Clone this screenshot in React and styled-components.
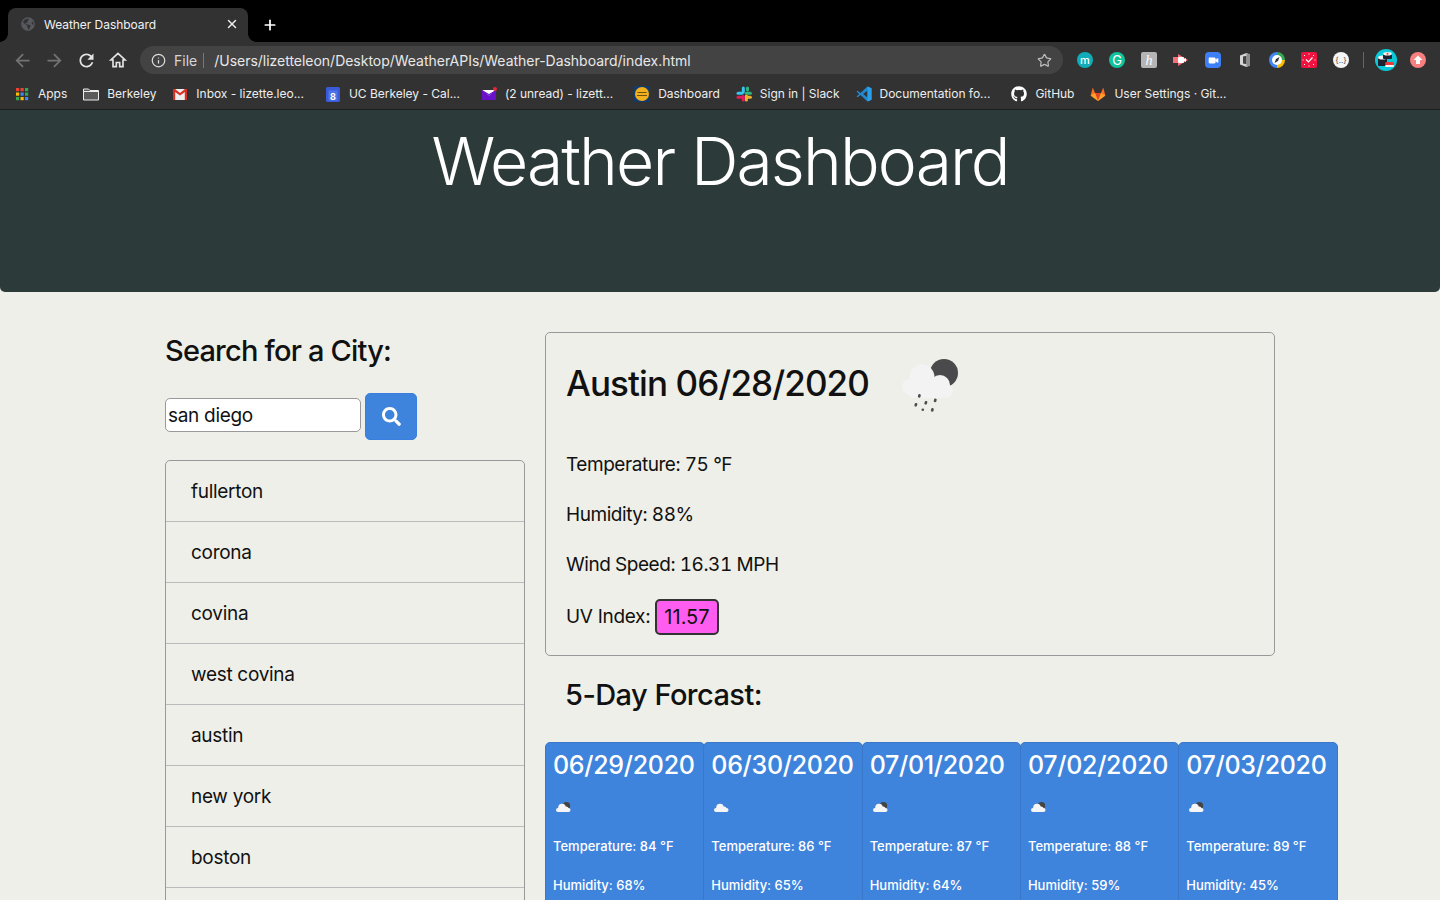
import React from "react";
import styled, { createGlobalStyle } from "styled-components";
import { Info, Star, X, Plus, Video } from "lucide-react";
import { FaGlobeAmericas, FaSearch, FaGithub } from "react-icons/fa";

const GlobalStyle = createGlobalStyle`
  html, body { margin: 0; padding: 0; background: #eeefe8; }
  body { font-family: Inter, "Liberation Sans", sans-serif; color: #111; overflow: hidden; }
  * { box-sizing: border-box; }
`;

const Page = styled.div`
  height: 900px;
  overflow: hidden;
  display: flex;
  flex-direction: column;
`;

/* browser chrome */
const TabStrip = styled.div`
  height: 42px;
  background: #000;
  display: flex;
  align-items: flex-end;
  padding-left: 8px;
  flex: none;
`;

const Tab = styled.div`
  position: relative;
  width: 240px;
  height: 34px;
  background: #323232;
  border-radius: 8px 8px 0 0;
  display: flex;
  align-items: center;
  padding: 0 9px 2px 13px;
  gap: 9px;
  color: #f1f1f1;
  font-size: 12px;

  &::before,
  &::after {
    content: "";
    position: absolute;
    bottom: 0;
    width: 8px;
    height: 8px;
  }
  &::before {
    left: -8px;
    background: radial-gradient(circle at 0 0, #000 7.5px, #323232 8px);
  }
  &::after {
    right: -8px;
    background: radial-gradient(circle at 100% 0, #000 7.5px, #323232 8px);
  }
`;

const TabTitle = styled.span`
  flex: 1;
  letter-spacing: -0.05px;
`;

const NewTab = styled.div`
  width: 16px;
  height: 34px;
  margin-left: 14px;
  padding-bottom: 1px;
  display: flex;
  align-items: center;
  color: #fff;
`;

const Toolbar = styled.div`
  height: 38px;
  background: #323232;
  display: flex;
  align-items: center;
  padding: 0 0 2px 6px;
  flex: none;
`;

const NavButton = styled.div`
  width: 32px;
  height: 28px;
  flex: none;
  display: flex;
  align-items: center;
  justify-content: center;
  color: ${(p) => (p.$off ? "#737373" : "#e3e3e3")};
`;

const AddressBar = styled.div`
  width: 923px;
  height: 28px;
  margin-left: 6px;
  flex: none;
  background: #434343;
  border-radius: 14px;
  display: flex;
  align-items: center;
  padding: 0 11px;
  color: #e8e8e8;
  font-size: 14px;
`;

const Scheme = styled.span`
  margin-left: 8px;
  padding-right: 6px;
  border-right: 1px solid #777;
  line-height: 15px;
  color: #d6d6d6;
`;

const Url = styled.span`
  margin-left: 10px;
  flex: 1;
  letter-spacing: -0.02px;
`;

const Extensions = styled.div`
  display: flex;
  align-items: center;
  margin-left: 6px;
  flex: none;
`;

const ExtSlot = styled.div`
  width: 32px;
  height: 28px;
  display: flex;
  align-items: center;
  justify-content: center;
`;

const ExtDivider = styled.div`
  width: 1px;
  height: 16px;
  background: #666;
  margin: 0 6px;
`;

const ExtBadge = styled.div`
  width: 16px;
  height: 16px;
  border-radius: ${(p) => p.$radius || "50%"};
  background: ${(p) => p.$bg};
  color: ${(p) => p.$fg || "#fff"};
  font-family: ${(p) => p.$font || "inherit"};
  font-size: ${(p) => p.$size || 11}px;
  font-weight: ${(p) => p.$weight || 400};
  line-height: 15px;
  text-align: center;
  display: flex;
  align-items: center;
  justify-content: center;
`;

const BookmarkBar = styled.div`
  height: 30px;
  background: #323232;
  border-bottom: 1px solid #1d1d1d;
  display: flex;
  align-items: center;
  padding: 0 0 2px 14px;
  gap: 16px;
  flex: none;
`;

const Bookmark = styled.div`
  display: flex;
  align-items: center;
  gap: 8px;
  color: #eee;
  font-size: 12px;
  letter-spacing: -0.02px;
  white-space: nowrap;
  padding-right: ${(p) => (p.$cut ? 5 : 0)}px;
`;

/* page */
const Hero = styled.header`
  height: 182px;
  background: #2d3a3a;
  border-radius: 0 0 5px 5px;
  text-align: center;
  flex: none;
`;

const HeroTitle = styled.h1`
  margin: 0;
  padding-top: 11px;
  font-size: 66px;
  line-height: 80px;
  font-weight: 300;
  letter-spacing: -1.9px;
  color: #fff;
`;

const Main = styled.main`
  display: flex;
  gap: 20px;
  padding: 40px 0 0 165px;
  flex: 1;
`;

const SearchColumn = styled.section`
  width: 360px;
  flex: none;
`;

const SearchTitle = styled.h2`
  margin: 0 0 24px;
  font-size: 29px;
  line-height: 37px;
  font-weight: 500;
  letter-spacing: -0.8px;
`;

const SearchRow = styled.div`
  display: flex;
  align-items: flex-start;
  gap: 4px;
  margin-bottom: 20px;
`;

const CityInput = styled.input`
  width: 196px;
  height: 34px;
  margin-top: 5px;
  padding: 0 2px;
  background: #fff;
  border: 1px solid #999;
  border-radius: 5px;
  font: 400 19px Inter, sans-serif;
  letter-spacing: -0.3px;
  color: #111;
  outline: none;
`;

const SearchButton = styled.button`
  width: 52px;
  height: 47px;
  border: 1px solid #3a7fe0;
  border-radius: 5px;
  background: #3f84dc;
  color: #fff;
  display: flex;
  align-items: center;
  justify-content: center;
  padding: 0;
  font-size: 19px;
`;

const CityList = styled.ul`
  margin: 0;
  padding: 0;
  list-style: none;
  border: 1px solid #999;
  border-radius: 5px;
`;

const CityItem = styled.li`
  height: ${(p) => (p.$first ? 60 : 61)}px;
  padding: 0 25px;
  display: flex;
  align-items: center;
  font-size: 19px;
  letter-spacing: -0.3px;
  color: #111;
  border-top: ${(p) => (p.$first ? "none" : "1px solid #bbb")};
`;

const Results = styled.section`
  width: 730px;
  flex: none;
`;

const CurrentCard = styled.div`
  height: 324px;
  border: 1px solid #999;
  border-radius: 5px;
  padding: 20px;
`;

const CityHeading = styled.div`
  display: flex;
  align-items: flex-start;
  gap: 30px;
  height: 100px;
`;

const CityName = styled.h2`
  margin: 8px 0 0;
  font-size: 35px;
  line-height: 44px;
  font-weight: 500;
  letter-spacing: -0.9px;
`;

const Stat = styled.p`
  margin: 0 0 26px;
  font-size: 19px;
  letter-spacing: -0.45px;
  line-height: 24px;
  font-variant-numeric: tabular-nums;
`;

const UvRow = styled.div`
  display: flex;
  align-items: center;
  gap: 5px;
  font-size: 19px;
  letter-spacing: -0.3px;
  line-height: 24px;
  margin-top: -4px;
`;

const UvBadge = styled.span`
  background: #ff5cf0;
  border: 2px solid #333;
  border-radius: 5px;
  padding: 4px 7px;
  font-size: 20px;
  letter-spacing: 0;
`;

const ForecastTitle = styled.h3`
  margin: 20px 0 29px 20px;
  font-size: 29px;
  line-height: 37px;
  font-weight: 500;
  letter-spacing: -0.55px;
`;

const ForecastRow = styled.div`
  display: flex;
  width: 793px;
`;

const ForecastCard = styled.div`
  width: 159.5px;
  flex: none;
  height: 220px;
  padding: 6px 7px;
  margin-right: -1.2px;
  background: #3f84dc;
  border: 1px solid #3a77c8;
  border-radius: 5px;
  color: #fff;
`;

const ForecastDate = styled.div`
  font-size: 25px;
  letter-spacing: -0.3px;
  line-height: 33px;
  font-weight: 500;
  white-space: nowrap;
`;

const ForecastIcon = styled.div`
  height: 16px;
  margin: 17px 0 23px;
  display: flex;
  align-items: center;
`;

const ForecastText = styled.p`
  margin: 0 0 23px;
  font-size: 13px;
  line-height: 16px;
  font-weight: 500;
  white-space: nowrap;
`;

const BackIcon = () => (
  <svg width="21" height="21" viewBox="0 0 24 24" fill="currentColor">
    <path d="M20 11H7.830l5.590-5.590L12 4l-8 8 8 8 1.410-1.410L7.830 13H20v-2z" />
  </svg>
);

const ForwardIcon = () => (
  <svg width="21" height="21" viewBox="0 0 24 24" fill="currentColor">
    <path d="M4 11h12.170l-5.590-5.590L12 4l8 8-8 8-1.410-1.410L16.170 13H4v-2z" />
  </svg>
);

const ReloadIcon = () => (
  <svg width="21" height="21" viewBox="0 0 24 24" fill="currentColor">
    <path d="M17.650 6.350C16.200 4.900 14.210 4 12 4c-4.420 0-7.990 3.580-7.990 8s3.570 8 7.990 8c3.730 0 6.840-2.550 7.730-6h-2.080c-.82 2.330-3.040 4-5.650 4-3.310 0-6-2.690-6-6s2.690-6 6-6c1.660 0 3.140.69 4.220 1.780L13 11h7V4l-2.350 2.350z" />
  </svg>
);

const HomeIcon = () => (
  <svg width="20" height="20" viewBox="0 0 24 24" fill="none" stroke="currentColor" strokeWidth="2">
    <path d="M12 4L3.500 12H6v8h4v-5h4v5h4v-8h2.500z" />
  </svg>
);

const AppsIcon = () => (
  <svg width="16" height="16" viewBox="0 0 16 16">
    {[2, 6.5, 11].map((y, r) =>
      [2, 6.5, 11].map((x, c) => (
        <rect
          key={`${r}${c}`}
          x={x}
          y={y}
          width="3.2"
          height="3.2"
          fill={[["#e94235", "#e94235", "#34a853"], ["#fbbc04", "#4285f4", "#34a853"], ["#34a853", "#fbbc04", "#4285f4"]][r][c]}
        />
      ))
    )}
  </svg>
);

const FolderIcon = () => (
  <svg width="16" height="16" viewBox="0 0 16 16">
    <path d="M.500 3h5l1.500 1.500h8.500V14H.500z" fill="#5a5a5a" stroke="#ececec" />
    <path d="M1 5.500h14" stroke="#ececec" />
  </svg>
);

const GmailIcon = () => (
  <svg width="16" height="16" viewBox="0 0 16 16">
    <rect x="1" y="3" width="14" height="11" fill="#eee" />
    <path d="M1 3h2.2v11H1zM12.800 3H15v11h-2.200z" fill="#d93025" />
    <path d="M1 3h2l5 4 5-4h2v1.600L8 9.600 1 4.600z" fill="#d93025" />
  </svg>
);

const CalendarIcon = () => (
  <svg width="16" height="16" viewBox="0 0 16 16">
    <rect x="1" y="1" width="14" height="15" rx="1.5" fill="#3a5bd9" />
    <rect x="3.5" y="4.5" width="9" height="10" fill="#4d74e8" />
    <text x="8" y="13.5" fontSize="9" fontWeight="700" fill="#fff" textAnchor="middle" fontFamily="Inter">8</text>
  </svg>
);

const YahooMailIcon = () => (
  <svg width="16" height="16" viewBox="0 0 16 16">
    <rect x="1" y="4" width="14" height="10" fill="#6a12c9" />
    <path d="M1 4h14L8 9.500z" fill="#fff" />
    <path d="M1 4l7 4 7-4v1.200L8 9.200 1 5.200z" fill="#6a12c9" />
    <circle cx="14" cy="3" r="2" fill="#e8263a" />
  </svg>
);

const DashboardIcon = () => (
  <svg width="16" height="16" viewBox="0 0 16 16">
    <rect width="16" height="16" fill="#123a6b" />
    <circle cx="8" cy="8" r="7" fill="#f2b01e" />
    <path d="M3.500 6.500h9M3 9.500h10" stroke="#6a5210" strokeWidth="1.200" />
  </svg>
);

const SlackIcon = () => (
  <svg width="16" height="16" viewBox="0 0 16 16">
    <rect x="5.800" y="0.500" width="3" height="7" rx="1.500" fill="#36c5f0" />
    <rect x="0.500" y="5.800" width="7" height="3" rx="1.500" fill="#36c5f0" />
    <rect x="8.900" y="5.800" width="7" height="3" rx="1.500" fill="#2eb67d" />
    <rect x="10" y="0.500" width="3" height="5" rx="1.500" fill="#2eb67d" />
    <rect x="8.900" y="8.500" width="3" height="7" rx="1.500" fill="#ecb22e" />
    <rect x="8.900" y="9.700" width="7" height="3" rx="1.500" fill="#ecb22e" />
    <rect x="5.800" y="9" width="3" height="6.500" rx="1.500" fill="#e01e5a" />
    <rect x="0.500" y="9.700" width="7" height="3" rx="1.500" fill="#e01e5a" />
  </svg>
);

const VsCodeIcon = () => (
  <svg width="16" height="16" viewBox="0 0 16 16">
    <path d="M11.500 0.500L15.500 2.300v11.400L11.500 15.500 4.500 9l-2.800 2.200L.5 10.500 3.200 8 .5 5.500l1.200-.7L4.500 7z" fill="#1f8ad2" />
    <path d="M11.500 4.600L7.200 8l4.300 3.400z" fill="#323232" />
    <path d="M11.500 0.500L15.500 2.300v11.400L11.500 15.500z" fill="#2ba0ea" />
  </svg>
);

const GitlabIcon = () => (
  <svg width="16" height="16" viewBox="0 0 16 16">
    <path d="M8 15L.6 9.500 2.800 1.500 5 7h6l2.200-5.500 2.200 8z" fill="#fc6d26" />
    <path d="M8 15L5 7h6z" fill="#e24329" />
    <path d="M.6 9.500L8 15 5 7z" fill="#fca326" />
    <path d="M15.400 9.500L8 15l3-8z" fill="#fca326" />
  </svg>
);

const PinIcon = () => (
  <svg width="16" height="16" viewBox="0 0 16 16">
    <path d="M0 5h5V2l10 6-10 6v-3H0z" fill="#f4717c" />
    <rect x="5" y="5" width="6" height="6" rx="1" fill="#fff" />
    <path d="M11 7.200L13 6v4l-2-1.200z" fill="#fff" />
  </svg>
);

const OfficeIcon = () => (
  <svg width="16" height="16" viewBox="0 0 16 16">
    <path d="M3 3.500L9.500 1l3.500 1.500v11L9.500 15 3 12.500z" fill="#d5d5d5" />
    <path d="M6 4.500l3.500-.8v8.600L6 11.500z" fill="#434343" />
    <path d="M9.500 1l3.500 1.500v11L9.500 15z" fill="#8e8e8e" />
  </svg>
);

const CompassIcon = () => (
  <svg width="16" height="16" viewBox="0 0 16 16">
    <path d="M8 0a8 8 0 0 1 8 8H8z" fill="#34a853" />
    <path d="M16 8a8 8 0 0 1-8 8V8z" fill="#fbbc04" />
    <path d="M8 16A8 8 0 0 1 8 0z" fill="#4285f4" />
    <circle cx="8" cy="8" r="5" fill="#fff" />
    <path d="M10.500 5l-1.500 4-3.500 2 1.500-4z" fill="#333" />
  </svg>
);

const TimerIcon = () => (
  <svg width="16" height="16" viewBox="0 0 16 16">
    <rect width="16" height="16" rx="2" fill="#f0123f" />
    <path d="M5 7.500l2.500 2.500 4-4.500" fill="none" stroke="#fff" strokeWidth="1.200" />
    <g fill="#fff">
      <rect x="7.500" y="1.500" width="1" height="1" />
      <rect x="3" y="3" width="1" height="1" />
      <rect x="12" y="3" width="1" height="1" />
      <rect x="1.500" y="7.500" width="1" height="1" />
      <rect x="13.500" y="7.500" width="1" height="1" />
      <rect x="3" y="12" width="1" height="1" />
      <rect x="12" y="12" width="1" height="1" />
      <rect x="7.500" y="13.500" width="1" height="1" />
    </g>
  </svg>
);

const SushiAvatar = () => (
  <svg width="22" height="22" viewBox="0 0 22 22">
    <circle cx="11" cy="11" r="11" fill="#0ac8d8" />
    <rect x="3" y="8" width="9" height="9" rx="1" fill="#1b2230" />
    <ellipse cx="7.500" cy="8.500" rx="4.500" ry="2" fill="#f2f2f2" />
    <rect x="8" y="4" width="9" height="6" rx="1" fill="#1b2230" />
    <ellipse cx="12.500" cy="4.800" rx="4.500" ry="1.800" fill="#f2f2f2" />
    <circle cx="12.500" cy="4.800" r="1" fill="#e83a3a" />
    <rect x="10" y="13" width="9" height="3" rx="1.500" fill="#e83a3a" />
    <rect x="10" y="16" width="9" height="2" rx="1" fill="#f4f4f4" />
  </svg>
);

const UploadIcon = () => (
  <svg width="16" height="16" viewBox="0 0 16 16">
    <circle cx="8" cy="8" r="8" fill="#f77f7f" />
    <path d="M8 3.500L12.500 8H10v4H6V8H3.500z" fill="#fff" />
  </svg>
);

const MoonRainIcon = () => (
  <svg width="60" height="60" viewBox="0 0 60 60">
    <circle cx="45" cy="20" r="14" fill="#4a4a4d" />
    <g fill="#f3f3f3">
      <circle cx="23" cy="24" r="12.500" />
      <circle cx="11" cy="34" r="8" />
      <circle cx="41" cy="32" r="10" />
      <circle cx="47" cy="38" r="7" />
      <rect x="8" y="30" width="42" height="15" rx="7" />
    </g>
    <g fill="#4d4d4d">
      <rect x="19" y="41" width="2.600" height="3.600" rx="1" transform="rotate(15 20 43)" />
      <rect x="15.500" y="50" width="2.600" height="3.600" rx="1" transform="rotate(15 17 52)" />
      <rect x="25.500" y="48" width="2.600" height="3.600" rx="1" transform="rotate(15 27 50)" />
      <rect x="22.500" y="55.500" width="2.600" height="2.600" rx="1.300" />
      <rect x="35" y="45.500" width="2.600" height="3.600" rx="1" transform="rotate(15 36 47)" />
      <rect x="32" y="55" width="2.600" height="3.600" rx="1" transform="rotate(15 33 57)" />
    </g>
  </svg>
);

const SmallCloud = ({ moon }) => (
  <svg width="20" height="16" viewBox="0 0 20 16">
    {moon && <circle cx="13.500" cy="6.800" r="3.700" fill="#444" />}
    <g fill="#f5f5f5">
      <circle cx="9" cy="8.500" r="3.800" />
      <circle cx="13" cy="10" r="2.600" />
      <rect x="3" y="9" width="14.500" height="4" rx="2" />
    </g>
  </svg>
);

const bookmarks = [
  { icon: <AppsIcon />, label: "Apps" },
  { icon: <FolderIcon />, label: "Berkeley" },
  { icon: <GmailIcon />, label: "Inbox - lizette.leo...", cut: true },
  { icon: <CalendarIcon />, label: "UC Berkeley - Cal...", cut: true },
  { icon: <YahooMailIcon />, label: "(2 unread) - lizett...", cut: true },
  { icon: <DashboardIcon />, label: "Dashboard" },
  { icon: <SlackIcon />, label: "Sign in | Slack" },
  { icon: <VsCodeIcon />, label: "Documentation fo...", cut: true },
  { icon: <FaGithub size={16} color="#fff" />, label: "GitHub" },
  { icon: <GitlabIcon />, label: "User Settings · Git...", cut: true },
];

const cities = ["fullerton", "corona", "covina", "west covina", "austin", "new york", "boston", ""];

const forecast = [
  { date: "06/29/2020", temp: 84, humidity: 68, moon: true },
  { date: "06/30/2020", temp: 86, humidity: 65 },
  { date: "07/01/2020", temp: 87, humidity: 64, moon: true },
  { date: "07/02/2020", temp: 88, humidity: 59, moon: true },
  { date: "07/03/2020", temp: 89, humidity: 45, moon: true },
];

export default function App() {
  return (
    <Page>
      <GlobalStyle />
      <TabStrip>
        <Tab>
          <FaGlobeAmericas size={14} color="#55585c" />
          <TabTitle>Weather Dashboard</TabTitle>
          <X size={14} color="#eee" strokeWidth={2.4} />
        </Tab>
        <NewTab>
          <Plus size={16} strokeWidth={2.6} />
        </NewTab>
      </TabStrip>

      <Toolbar>
        <NavButton $off><BackIcon /></NavButton>
        <NavButton $off><ForwardIcon /></NavButton>
        <NavButton><ReloadIcon /></NavButton>
        <NavButton><HomeIcon /></NavButton>
        <AddressBar>
          <Info size={15} color="#ddd" />
          <Scheme>File</Scheme>
          <Url>/Users/lizetteleon/Desktop/WeatherAPIs/Weather-Dashboard/index.html</Url>
          <Star size={15} color="#bbb" />
        </AddressBar>
        <Extensions>
          <ExtSlot><ExtBadge $bg="#10adb8" $weight={500}>m</ExtBadge></ExtSlot>
          <ExtSlot><ExtBadge $bg="#11c39c" $size={13}>G</ExtBadge></ExtSlot>
          <ExtSlot><ExtBadge $bg="#b5b5b5" $radius="2px" $font="'Liberation Serif', serif" $size={14}><i>h</i></ExtBadge></ExtSlot>
          <ExtSlot><PinIcon /></ExtSlot>
          <ExtSlot>
            <ExtBadge $bg="#3f7ff5" $radius="4px">
              <Video size={11} fill="#fff" strokeWidth={1} />
            </ExtBadge>
          </ExtSlot>
          <ExtSlot><OfficeIcon /></ExtSlot>
          <ExtSlot><CompassIcon /></ExtSlot>
          <ExtSlot><TimerIcon /></ExtSlot>
          <ExtSlot><ExtBadge $bg="#f5f5f5" $fg="#444" $size={8}>{"{..}"}</ExtBadge></ExtSlot>
          <ExtDivider />
          <ExtSlot><SushiAvatar /></ExtSlot>
          <ExtSlot><UploadIcon /></ExtSlot>
        </Extensions>
      </Toolbar>

      <BookmarkBar>
        {bookmarks.map((b) => (
          <Bookmark key={b.label} $cut={b.cut}>
            {b.icon}
            {b.label}
          </Bookmark>
        ))}
      </BookmarkBar>

      <Hero>
        <HeroTitle>Weather Dashboard</HeroTitle>
      </Hero>

      <Main>
        <SearchColumn>
          <SearchTitle>Search for a City:</SearchTitle>
          <SearchRow>
            <CityInput defaultValue="san diego" />
            <SearchButton><FaSearch /></SearchButton>
          </SearchRow>
          <CityList>
            {cities.map((c, i) => (
              <CityItem key={i} $first={i === 0}>{c}</CityItem>
            ))}
          </CityList>
        </SearchColumn>

        <Results>
          <CurrentCard>
            <CityHeading>
              <CityName>Austin 06/28/2020</CityName>
              <MoonRainIcon />
            </CityHeading>
            <Stat>Temperature: 75 °F</Stat>
            <Stat>Humidity: 88%</Stat>
            <Stat>Wind Speed: 16.31 MPH</Stat>
            <UvRow>UV Index: <UvBadge>11.57</UvBadge></UvRow>
          </CurrentCard>
          <ForecastTitle>5-Day Forcast:</ForecastTitle>
          <ForecastRow>
            {forecast.map((f) => (
              <ForecastCard key={f.date}>
                <ForecastDate>{f.date}</ForecastDate>
                <ForecastIcon><SmallCloud moon={f.moon} /></ForecastIcon>
                <ForecastText>Temperature: {f.temp} °F</ForecastText>
                <ForecastText>Humidity: {f.humidity}%</ForecastText>
              </ForecastCard>
            ))}
          </ForecastRow>
        </Results>
      </Main>
    </Page>
  );
}
